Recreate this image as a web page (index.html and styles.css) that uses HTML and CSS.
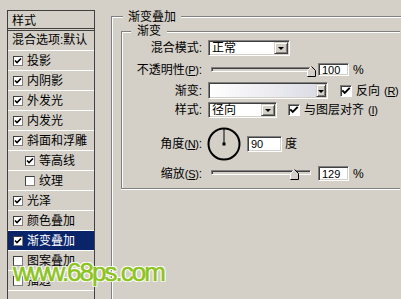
FILE: index.html
```html
<!DOCTYPE html>
<html lang="zh-CN">
<head>
  <meta charset="UTF-8">
  <title>图层样式 - 渐变叠加</title>
  <link rel="stylesheet" href="styles.css">
</head>
<body>

  <div class="dialog">
    <ul class="style-list">
      <li class="list-head">样式</li>
      <li class="list-blend">混合选项:默认</li>
      <li class="item"><span class="check"><svg viewBox="0 0 8 8"><path d="M1 3.5l2 2 4-4"/></svg></span>投影</li>
      <li class="item"><span class="check"><svg viewBox="0 0 8 8"><path d="M1 3.5l2 2 4-4"/></svg></span>内阴影</li>
      <li class="item"><span class="check"><svg viewBox="0 0 8 8"><path d="M1 3.5l2 2 4-4"/></svg></span>外发光</li>
      <li class="item"><span class="check"><svg viewBox="0 0 8 8"><path d="M1 3.5l2 2 4-4"/></svg></span>内发光</li>
      <li class="item"><span class="check"><svg viewBox="0 0 8 8"><path d="M1 3.5l2 2 4-4"/></svg></span>斜面和浮雕</li>
      <li class="item sub"><span class="check"><svg viewBox="0 0 8 8"><path d="M1 3.5l2 2 4-4"/></svg></span>等高线</li>
      <li class="item sub"><span class="check"></span>纹理</li>
      <li class="item"><span class="check"><svg viewBox="0 0 8 8"><path d="M1 3.5l2 2 4-4"/></svg></span>光泽</li>
      <li class="item"><span class="check"><svg viewBox="0 0 8 8"><path d="M1 3.5l2 2 4-4"/></svg></span>颜色叠加</li>
      <li class="item selected"><span class="check"><svg viewBox="0 0 8 8"><path d="M1 3.5l2 2 4-4"/></svg></span>渐变叠加</li>
      <li class="item"><span class="check"></span>图案叠加</li>
      <li class="item"><span class="check"></span>描边</li>
    </ul>

    <div class="panel">
      <div class="group-outer">
        <span class="group-title outer-title">渐变叠加</span>
        <div class="group-inner">
          <span class="group-title inner-title">渐变</span>

          <div class="row row-mode">
            <span class="lbl">混合模式:</span>
            <div class="select sel-mode"><span class="select-text">正常</span><span class="drop"></span></div>
          </div>

          <div class="row row-opacity">
            <span class="lbl">不透明性<span class="key">(<u>P</u>)</span>:</span>
            <div class="slider">
              <div class="track"></div>
              <svg class="thumb" style="left: 99px" width="9" height="11" viewBox="0 0 9 11"><path class="thumb-fill" d="M0.5 10.5V4.5l4-4 4 4v6z"/><path class="thumb-light" d="M0.5 10V4.5l4-4"/><path class="thumb-dark" d="M4.5 0.5l4 4v6h-8"/></svg>
            </div>
            <div class="num num-sm">100</div>
            <span class="unit">%</span>
          </div>

          <div class="row row-gradient">
            <span class="lbl">渐变:</span>
            <div class="gradient"><span class="gradient-fill"></span><span class="drop drop-thin"></span></div>
            <label class="checkfield cf-reverse"><span class="check big"><svg viewBox="0 0 8 8"><path d="M1 3.5l2 2 4-4"/></svg></span>反向<span class="key">(<u>R</u>)</span></label>
          </div>

          <div class="row row-style">
            <span class="lbl">样式:</span>
            <div class="select sel-style"><span class="select-text">径向</span><span class="drop"></span></div>
            <label class="checkfield cf-align"><span class="check big"><svg viewBox="0 0 8 8"><path d="M1 3.5l2 2 4-4"/></svg></span>与图层对齐<span class="key">(<u>I</u>)</span></label>
          </div>

          <div class="row row-angle">
            <span class="lbl">角度<span class="key">(<u>N</u>)</span>:</span>
            <svg class="dial" width="34" height="34" viewBox="0 0 34 34">
              <circle cx="17" cy="17" r="15.5" fill="none" stroke="#000" stroke-width="2"/>
              <path d="M17 17V2" stroke="#000" stroke-width="1"/>
              <rect x="15.5" y="15.5" width="3" height="3" fill="#000"/>
            </svg>
            <div class="num num-angle">90</div>
            <span class="unit">度</span>
          </div>

          <div class="row row-scale">
            <span class="lbl">缩放<span class="key">(<u>S</u>)</span>:</span>
            <div class="slider">
              <div class="track"></div>
              <svg class="thumb" style="left: 82px" width="9" height="11" viewBox="0 0 9 11"><path class="thumb-fill" d="M0.5 10.5V4.5l4-4 4 4v6z"/><path class="thumb-light" d="M0.5 10V4.5l4-4"/><path class="thumb-dark" d="M4.5 0.5l4 4v6h-8"/></svg>
            </div>
            <div class="num">129</div>
            <span class="unit">%</span>
          </div>
        </div>
      </div>
    </div>

    <div class="watermark">www.68ps.com</div>
  </div>

</body>
</html>
```

FILE: styles.css
```css
* {
  margin: 0;
  padding: 0;
  box-sizing: border-box;
}

body {
  width: 401px;
  height: 299px;
  overflow: hidden;
  background: #d4d0c8;
  color: #000;
  font-family: "Liberation Sans", "Noto Sans CJK SC", sans-serif;
  font-size: 12px;
  line-height: 12px;
}

.dialog {
  position: relative;
  display: flex;
  align-items: flex-start;
  height: 299px;
}

/* left list */
.style-list {
  list-style: none;
  width: 88px;
  height: 289px;
  margin: 10px 0 0 7px;
  border: 1px solid #404040;
  border-bottom: none;
  flex-shrink: 0;
  overflow: hidden;
}

.list-head {
  height: 20px;
  padding: 4px 0 0 4px;
  border-bottom: 3px double #404040;
}

.list-blend {
  height: 20px;
  padding: 3px 0 0 4px;
  border-bottom: 1px solid #fff;
  white-space: nowrap;
}

.item {
  display: flex;
  align-items: center;
  gap: 4px;
  height: 20px;
  padding-left: 5px;
  border-bottom: 1px solid #fff;
  white-space: nowrap;
}

.item.sub {
  padding-left: 17px;
}

.item.selected {
  background: #0a246a;
  color: #fff;
}

.check {
  display: inline-block;
  flex-shrink: 0;
  width: 10px;
  height: 10px;
  background: #fff;
  border: 1px solid;
  border-color: #404040 #808080 #808080 #404040;
}

.check.big {
  width: 12px;
  height: 12px;
  border-color: #808080 #fff #fff #808080;
  box-shadow: inset 1px 1px 0 #404040;
}

.check svg {
  display: block;
  width: 100%;
  height: 100%;
  fill: none;
  stroke: #000;
  stroke-width: 1.6;
}

/* right panel */
.panel {
  flex: 1;
  margin: 16px 0 0 16px;
}

.group-outer {
  position: relative;
  width: 290px;
  height: 283px;
  padding: 14px 0 0 9px;
  border-top: 1px solid #808080;
  border-left: 1px solid #808080;
  box-shadow: inset 1px 1px 0 #fff;
}

.group-title {
  position: absolute;
  background: #d4d0c8;
  white-space: nowrap;
}

.outer-title {
  top: -6px;
  left: 11px;
  padding: 0 5px;
}

.group-inner {
  position: relative;
  width: 279px;
  height: 158px;
  padding-top: 8px;
  border: 1px solid #808080;
  border-right: none;
  box-shadow: inset 1px 1px 0 #fff, 0 1px 0 #fff;
}

.inner-title {
  top: -7px;
  left: 9px;
  padding: 0 6px;
}

.row {
  display: flex;
  align-items: center;
}

.lbl {
  width: 80px;
  margin-right: 6px;
  text-align: right;
  white-space: nowrap;
  flex-shrink: 0;
}

.key {
  font-size: 11px;
  letter-spacing: -0.3px;
}

.row-mode { height: 16px; }
.row-opacity { height: 15px; margin-top: 6px; }
.row-gradient { height: 17px; margin-top: 5px; }
.row-style { height: 16px; margin-top: 3px; }
.row-angle { height: 36px; margin-top: 8px; }
.row-scale { height: 17px; margin-top: 3px; }

.select,
.gradient,
.num {
  display: flex;
  flex-shrink: 0;
  background: #fff;
  border: 1px solid;
  border-color: #808080 #fff #fff #808080;
  box-shadow: inset 1px 1px 0 #404040, inset -1px -1px 0 #d4d0c8;
  padding: 1px;
}

.select {
  height: 16px;
}

.sel-mode { width: 82px; }
.sel-style { width: 69px; }

.select-text {
  flex: 1;
  padding-left: 2px;
  line-height: 12px;
}

.drop {
  position: relative;
  width: 14px;
  background: #d4d0c8;
  border: 1px solid;
  border-color: #d4d0c8 #404040 #404040 #d4d0c8;
  box-shadow: inset 1px 1px 0 #fff, inset -1px -1px 0 #808080;
}

.drop::after {
  content: "";
  position: absolute;
  left: 50%;
  top: 50%;
  margin: -1px 0 0 -3px;
  border-left: 3px solid transparent;
  border-right: 3px solid transparent;
  border-top: 3px solid #000;
}

.drop-thin {
  width: 10px;
}

.gradient {
  width: 120px;
  height: 17px;
}

.gradient-fill {
  flex: 1;
  background: linear-gradient(to right, #fff, #dcdce6);
}

.checkfield {
  display: flex;
  align-items: center;
  gap: 4px;
  white-space: nowrap;
}

.cf-reverse { margin-left: 12px; }
.cf-align { margin-left: 11px; }

.slider {
  position: relative;
  align-self: stretch;
  flex-shrink: 0;
  width: 107px;
}

.track {
  width: 100px;
  height: 5px;
  margin: 5px 0 0 3px;
  border: 1px solid;
  border-color: #808080 #fff #fff #808080;
  box-shadow: inset 1px 1px 0 #404040;
  background: #d4d0c8;
}

.thumb {
  position: absolute;
  top: 4px;
}

.thumb-fill { fill: #d4d0c8; }
.thumb-light { fill: none; stroke: #fff; }
.thumb-dark { fill: none; stroke: #000; }

.num {
  width: 31px;
  height: 15px;
  margin-left: 3px;
  padding-left: 3px;
  align-items: center;
  font-size: 11px;
}

.num-sm {
  height: 13px;
}

.num-angle {
  width: 35px;
  height: 16px;
  margin-left: 6px;
}

.dial {
  flex-shrink: 0;
  margin-left: -1px;
}

.unit {
  margin-left: 4px;
}

.row-angle .unit {
  margin-left: 3px;
}

/* watermark */
.watermark {
  position: absolute;
  left: 13px;
  top: 258px;
  font-family: "Liberation Sans", sans-serif;
  font-size: 26px;
  line-height: 28px;
  letter-spacing: -2px;
  color: #8cc31e;
  -webkit-text-stroke: 0.5px #8cc31e;
  text-shadow: 1px 0 #fff, -1px 0 #fff, 0 1px #fff, 0 -1px #fff,
    1px 1px #fff, -1px -1px #fff, 1px -1px #fff, -1px 1px #fff;
}
```
